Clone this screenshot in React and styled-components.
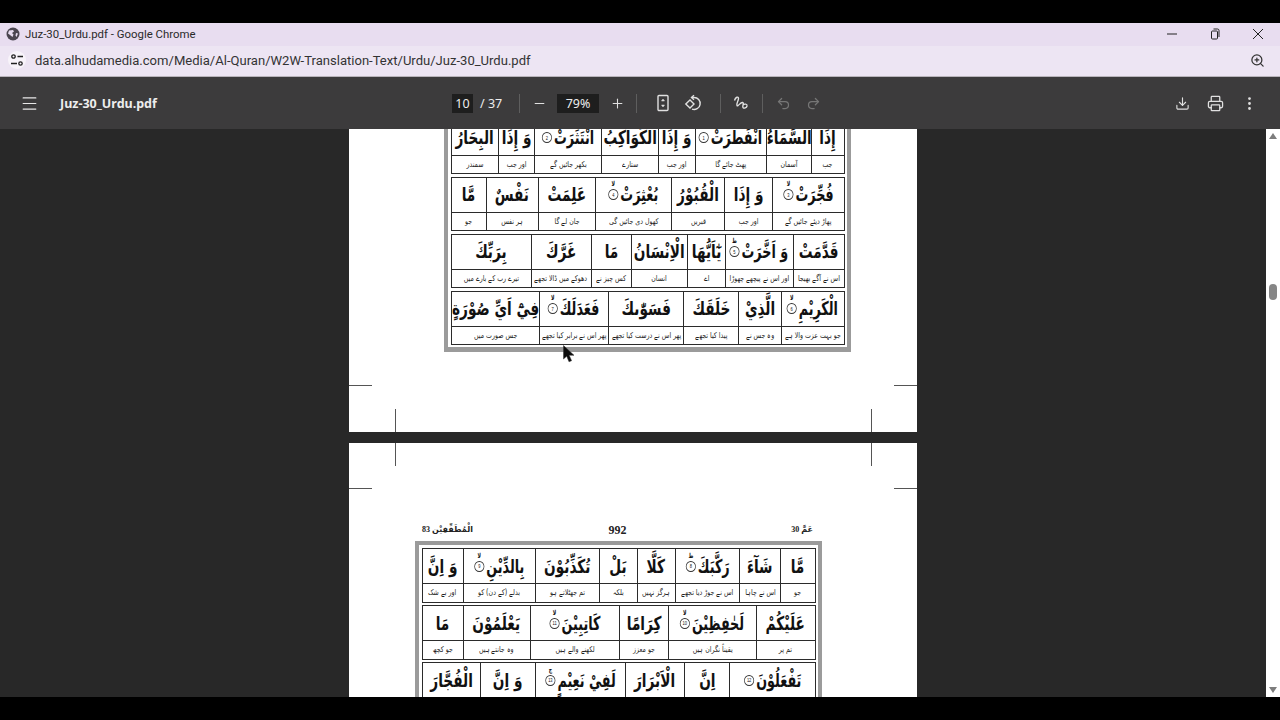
import styled, { createGlobalStyle } from "styled-components";
import {
  Menu,
  Minus,
  Plus,
  Download,
  Printer,
  EllipsisVertical,
  Undo2,
  Redo2,
  ZoomIn,
} from "lucide-react";

const firstPageRows = [
  {
    widths: [32, 45, 72, 36, 57, 68, 36, 47],
    words: ["إِذَا", "السَّمَآءُ", ["انْفَطَرَتْ", "1"], "وَ إِذَا", "الْكَوَاكِبُ", ["انْتَثَرَتْ", "2"], "وَ إِذَا", "الْبِحَارُ"],
    notes: ["جب", "آسمان", "پھٹ جائے گا", "اور جب", "ستارے", "بکھر جائیں گے", "اور جب", "سمندر"],
  },
  {
    widths: [72, 48, 53, 77, 57, 52, 35],
    words: [["فُجِّرَتْ", "3", "لا"], "وَ إِذَا", "الْقُبُوْرُ", ["بُعْثِرَتْ", "4", "لا"], "عَلِمَتْ", "نَفْسٌ", "مَّا"],
    notes: ["پھاڑ دیئے جائیں گے", "اور جب", "قبریں", "کھول دی جائیں گی", "جان لے گا", "ہر نفس", "جو"],
  },
  {
    widths: [51, 68, 38, 56, 40, 60, 81],
    words: ["قَدَّمَتْ", ["وَ اَخَّرَتْ", "5", "ط"], "يٰٓاَيُّهَا", "الْاِنْسَانُ", "مَا", "غَرَّكَ", "بِرَبِّكَ"],
    notes: ["اس نے آگے بھیجا", "اور اس نے پیچھے چھوڑا", "اے", "انسان", "کس چیز نے", "دھوکے میں ڈالا تجھے", "تیرے رب کے بارے میں"],
  },
  {
    widths: [63, 42, 55, 76, 69, 89],
    words: [["الْكَرِيْمِ", "6", "لا"], "الَّذِيْ", "خَلَقَكَ", "فَسَوّٰىكَ", ["فَعَدَلَكَ", "7", "لا"], "فِيْٓ اَيِّ صُوْرَةٍ"],
    notes: ["جو بہت عزت والا ہے", "وہ جس نے", "پیدا کیا تجھے", "پھر اس نے درست کیا تجھے", "پھر اس نے برابر کیا تجھے", "جس صورت میں"],
  },
];

const secondPageRows = [
  {
    widths: [34, 41, 65, 38, 37, 65, 73, 41],
    words: ["مَّا", "شَآءَ", ["رَكَّبَكَ", "8", "ط"], "كَلَّا", "بَلْ", "تُكَذِّبُوْنَ", ["بِالدِّيْنِ", "9", "لا"], "وَ اِنَّ"],
    notes: ["جو", "اس نے چاہا", "اس نے جوڑ دیا تجھے", "ہرگز نہیں", "بلکہ", "تم جھٹلاتے ہو", "بدلے (کے دن) کو", "اور بے شک"],
  },
  {
    widths: [59, 88, 49, 90, 67, 41],
    words: ["عَلَيْكُمْ", ["لَحٰفِظِيْنَ", "10", "لا"], "كِرَامًا", ["كَاتِبِيْنَ", "11", "لا"], "يَعْلَمُوْنَ", "مَا"],
    notes: ["تم پر", "یقیناً نگران ہیں", "جو معزز", "لکھنے والے ہیں", "وہ جانتے ہیں", "جو کچھ"],
  },
  {
    widths: [86, 45, 59, 91, 54, 59],
    words: [["تَفْعَلُوْنَ", "12"], "اِنَّ", "الْاَبْرَارَ", ["لَفِيْ نَعِيْمٍ", "13", "ج"], "وَ اِنَّ", "الْفُجَّارَ"],
    notes: ["تم کرتے ہو", "بے شک", "نیک لوگ", "نعمتوں میں ہوں گے", "اور بے شک", "بدکار"],
  },
];

const AyahTable = ({ rows }) => (
  <Frame>
    {rows.map((row, i) => (
      <VerseRow key={i} $widths={row.widths}>
        {row.words.map((word, j) => (
          <WordCell key={j}>
            {Array.isArray(word) ? (
              <WordFit $scale={0.67}>
                {word[0]}
                <AyahMark>
                  {word[1]}
                  {word[2] && <StopSign>{word[2]}</StopSign>}
                </AyahMark>
              </WordFit>
            ) : (
              <WordFit $scale={0.72}>{word}</WordFit>
            )}
          </WordCell>
        ))}
        {row.notes.map((note, j) => (
          <NoteCell key={j}>
            <NoteFit>{note}</NoteFit>
          </NoteCell>
        ))}
      </VerseRow>
    ))}
  </Frame>
);

const CropMarks = ({ $edge }) => (
  <>
    <MarkH $edge={$edge} $side="left" />
    <MarkH $edge={$edge} $side="right" />
    <MarkV $edge={$edge} $side="left" />
    <MarkV $edge={$edge} $side="right" />
  </>
);

const App = () => {
  return (
    <Screen>
      <GlobalStyle />
      <TitleBar>
        <TitleGroup>
          <svg width="14" height="14" viewBox="0 0 14 14">
            <circle cx="7" cy="7" r="6.5" fill="#4b4650" />
            <path d="M3 3.500 7 3l1 1.500-2 1.500 1.500 1.500-1 2.500L4 8 2 6.500zM10 6l2 .5-1.500 3.500-1-1.500z" fill="#e6dcef" />
          </svg>
          Juz-30_Urdu.pdf - Google Chrome
        </TitleGroup>
        <WindowButtons>
          <svg width="12" height="12" viewBox="0 0 12 12">
            <path d="M1 6h10" stroke="#222" strokeWidth="1" />
          </svg>
          <svg width="12" height="12" viewBox="0 0 12 12" fill="none" stroke="#222">
            <rect x="2.500" y="3" width="6" height="8" rx="1" />
            <path d="M4.500 1h4a1.500 1.500 0 0 1 1.500 1.500V9" />
          </svg>
          <svg width="12" height="12" viewBox="0 0 12 12">
            <path d="M1 1l10 10M11 1 1 11" stroke="#222" strokeWidth="1" />
          </svg>
        </WindowButtons>
      </TitleBar>

      <AddressBar>
        <TuneBadge>
          <svg width="14" height="14" viewBox="0 0 14 14" fill="none" stroke="#222" strokeWidth="1.300">
            <circle cx="3.500" cy="3.500" r="1.700" />
            <path d="M7.500 3.500H13M1 10.500h6" />
            <circle cx="10.500" cy="10.500" r="1.700" />
          </svg>
        </TuneBadge>
        <Url>data.alhudamedia.com/Media/Al-Quran/W2W-Translation-Text/Urdu/Juz-30_Urdu.pdf</Url>
        <ZoomIn size={15} color="#333" strokeWidth={2} />
      </AddressBar>

      <Toolbar>
        <ToolStart>
          <Menu size={19} color="#e8e8e8" strokeWidth={1.500} />
          <FileName>Juz-30_Urdu.pdf</FileName>
        </ToolStart>
        <ToolCenter>
          <NumberBox $width={21}>10</NumberBox>
          <PageCount>/ 37</PageCount>
          <ToolDivider $left={12} $right={4} />
          <IconSlot>
            <Minus size={15} color="#e0e0e0" strokeWidth={1.700} />
          </IconSlot>
          <NumberBox $width={42} $left={3}>79%</NumberBox>
          <IconSlot $left={3}>
            <Plus size={15} color="#e0e0e0" strokeWidth={1.700} />
          </IconSlot>
          <ToolDivider $left={4} $right={11} />
          <IconSlot>
            <svg width="18" height="18" viewBox="0 0 18 18" fill="none" stroke="#e0e0e0" strokeWidth="1.400">
              <rect x="4" y="1.500" width="10" height="15" rx="1" />
              <path d="M9 5 7.500 7h3zM9 13l-1.500-2h3z" fill="#e0e0e0" strokeWidth="0.500" />
            </svg>
          </IconSlot>
          <IconSlot>
            <svg width="18" height="18" viewBox="0 0 18 18" fill="none" stroke="#e0e0e0" strokeWidth="1.400">
              <path d="M1.800 10 6 6l4 4-4 4z" />
              <path d="M7.500 3.500H10a6 6 0 1 1-2 11.600" />
              <path d="M10 1.200 7.500 3.500 10 5.800" />
            </svg>
          </IconSlot>
          <ToolDivider $left={12} $right={5} />
          <IconSlot>
            <svg width="18" height="18" viewBox="0 0 18 18" fill="none" stroke="#e0e0e0" strokeWidth="1.400">
              <path d="M2.500 6.500C3.500 3 6.500 2 6.500 4.500 6.500 7 4 9.500 5 11.500c1 1.500 3.500-3.500 5.500-3 2 .5-.5 3.500.5 5 1 1.200 3.500.5 4-1.500.4-2-2.500-2.500-4-1" />
            </svg>
          </IconSlot>
          <ToolDivider $left={6} $right={5} />
          <IconSlot>
            <Undo2 size={15} color="#767676" />
          </IconSlot>
          <IconSlot>
            <Redo2 size={15} color="#767676" />
          </IconSlot>
        </ToolCenter>
        <ToolEnd>
          <Download size={15} color="#e0e0e0" strokeWidth={1.800} />
          <Printer size={17} color="#e0e0e0" strokeWidth={1.800} />
          <EllipsisVertical size={17} color="#e0e0e0" />
        </ToolEnd>
      </Toolbar>

      <Viewer>
        <Pages>
          <Page $height={303} $bottom={80} $indent={95}>
            <AyahTable rows={firstPageRows} />
            <CropMarks $edge="bottom" />
          </Page>
          <Page $top={78} $indent={66}>
            <PageHeader>
              <HeaderSide>83 الْمُطَفِّفِيْن</HeaderSide>
              <PageNumber>992</PageNumber>
              <HeaderSide $end>عَمَّ 30</HeaderSide>
            </PageHeader>
            <AyahTable rows={secondPageRows} />
            <CropMarks $edge="top" />
          </Page>
        </Pages>
        <Scrollbar>
          <ScrollArrow />
          <ScrollTrack>
            <ScrollThumb />
          </ScrollTrack>
          <ScrollArrow $down />
        </Scrollbar>
        <Pointer width="13" height="18" viewBox="0 0 13 18">
          <path d="M0.500 0.500V14l3.200-2.800 2.300 5.600 2.600-1.100-2.400-5.400H11z" fill="#0c0c0c" stroke="#333" strokeWidth="0.500" />
        </Pointer>
      </Viewer>
    </Screen>
  );
};

const GlobalStyle = createGlobalStyle`
  html, body, #root {
    margin: 0;
    height: 100%;
    background: #000;
  }
  * {
    box-sizing: border-box;
  }
`;

const Screen = styled.div`
  height: 720px;
  padding: 23px 0;
  display: flex;
  flex-direction: column;
  overflow: hidden;
  font-family: "Noto Sans", "Liberation Sans", sans-serif;
`;

const TitleBar = styled.div`
  height: 23px;
  flex: none;
  padding: 0 16px 1px 6px;
  display: flex;
  align-items: center;
  justify-content: space-between;
  background: #e8ddf0;
  color: #2a2a2a;
  font-family: Roboto, sans-serif;
  font-size: 11.400px;
`;

const TitleGroup = styled.div`
  display: flex;
  align-items: center;
  gap: 5px;
`;

const WindowButtons = styled.div`
  display: flex;
  align-items: center;
  gap: 31px;
`;

const AddressBar = styled.div`
  height: 31px;
  flex: none;
  padding: 0 15px 2px 8px;
  display: flex;
  align-items: center;
  background: #ede5f3;
  border-bottom: 1px solid #b9b4bb;
`;

const TuneBadge = styled.div`
  width: 18px;
  height: 18px;
  margin-right: 9px;
  display: flex;
  align-items: center;
  justify-content: center;
  background: #f8f4fa;
  border-radius: 50%;
`;

const Url = styled.div`
  flex: 1;
  color: #333;
  font-family: Roboto, sans-serif;
  font-size: 13.050px;
`;

const Toolbar = styled.div`
  height: 52px;
  flex: none;
  display: grid;
  grid-template-columns: 452px auto 1fr;
  align-items: center;
  background: #3c3b3c;
  color: #ededed;
  font-size: 12.500px;
`;

const ToolStart = styled.div`
  padding-left: 20px;
  display: flex;
  align-items: center;
  gap: 21px;
`;

const FileName = styled.div`
  font-weight: 700;
`;

const ToolCenter = styled.div`
  display: flex;
  align-items: center;
`;

const NumberBox = styled.div`
  width: ${(p) => p.$width}px;
  height: 19px;
  margin-left: ${(p) => p.$left || 0}px;
  display: flex;
  align-items: center;
  justify-content: center;
  background: #1e1e1e;
`;

const PageCount = styled.div`
  width: 27px;
  margin-left: 7px;
`;

const ToolDivider = styled.div`
  width: 1px;
  height: 19px;
  margin-left: ${(p) => p.$left}px;
  margin-right: ${(p) => p.$right}px;
  background: #5e5e5e;
`;

const IconSlot = styled.div`
  width: 30px;
  margin-left: ${(p) => p.$left || 0}px;
  display: flex;
  justify-content: center;
`;

const ToolEnd = styled.div`
  padding-right: 22px;
  display: flex;
  align-items: center;
  justify-content: flex-end;
  gap: 17px;
`;

const Viewer = styled.div`
  flex: 1;
  min-height: 0;
  position: relative;
  display: flex;
  background: #282828;
`;

const Pages = styled.div`
  flex: 1;
  display: flex;
  flex-direction: column;
  align-items: center;
  gap: 11px;
  overflow: hidden;
`;

const Page = styled.div`
  width: 568px;
  flex: none;
  height: ${(p) => (p.$height ? `${p.$height}px` : "auto")};
  padding: ${(p) => p.$top || 0}px 0 ${(p) => p.$bottom || 0}px ${(p) => p.$indent}px;
  position: relative;
  display: flex;
  flex-direction: column;
  justify-content: ${(p) => (p.$height ? "flex-end" : "flex-start")};
  background: #fff;
  overflow: hidden;
`;

const MarkH = styled.div`
  position: absolute;
  ${(p) => p.$side}: 0;
  ${(p) => p.$edge}: ${(p) => (p.$edge === "bottom" ? 46 : 45)}px;
  width: 23px;
  height: 1px;
  background: #555;
`;

const MarkV = styled.div`
  position: absolute;
  ${(p) => p.$side}: ${(p) => (p.$side === "left" ? 46 : 45)}px;
  ${(p) => p.$edge}: 0;
  width: 1px;
  height: 23px;
  background: #555;
`;

const PageHeader = styled.div`
  width: 391px;
  height: 20px;
  margin-left: 7px;
  display: grid;
  grid-template-columns: 1fr auto 1fr;
  align-items: start;
  line-height: 18px;
  color: #222;
  font-family: "Liberation Serif", "DejaVu Sans", serif;
`;

const HeaderSide = styled.div`
  text-align: ${(p) => (p.$end ? "right" : "left")};
  font-size: 8px;
  font-weight: 700;
`;

const PageNumber = styled.div`
  font-size: 12px;
  font-weight: 700;
`;

const Frame = styled.div`
  width: 407px;
  flex: none;
  padding: 3px 2.500px 2px;
  display: flex;
  flex-direction: column;
  gap: 2.500px;
  border: 4px solid #9b9b9b;
  border-bottom-width: 5px;
  background: #fff;
`;

const VerseRow = styled.div`
  width: 394px;
  flex: none;
  display: grid;
  grid-template-columns: ${(p) => p.$widths.map((w) => `${w}fr`).join(" ")};
  grid-template-rows: 34px 17.500px;
  direction: rtl;
  border: 1px solid #2b2b2b;
  background: #2b2b2b;
  gap: 1px;
`;

const WordCell = styled.div`
  min-width: 0;
  display: flex;
  align-items: center;
  justify-content: center;
  background: #fff;
  color: #111;
  font-family: "DejaVu Sans", sans-serif;
  font-size: 19px;
  font-weight: 700;
  line-height: 1;
  white-space: nowrap;
  overflow: hidden;
`;

const WordFit = styled.span`
  flex: none;
  display: inline-flex;
  align-items: center;
  gap: 3px;
  transform: scaleX(${(p) => p.$scale});
`;

const AyahMark = styled.span`
  width: 15px;
  height: 11px;
  flex: none;
  position: relative;
  display: flex;
  align-items: center;
  justify-content: center;
  border: 1px solid #333;
  border-radius: 50%;
  font-family: "Liberation Sans", sans-serif;
  font-size: 6px;
  font-weight: 400;
`;

const StopSign = styled.span`
  position: absolute;
  top: -9px;
  left: 0;
  right: 0;
  text-align: center;
  font-family: "DejaVu Sans", sans-serif;
  font-size: 7px;
  font-weight: 700;
`;

const NoteCell = styled.div`
  min-width: 0;
  display: flex;
  align-items: center;
  justify-content: center;
  background: #fff;
  color: #222;
  font-family: "DejaVu Sans", sans-serif;
  font-size: 8px;
  white-space: nowrap;
  overflow: hidden;
`;

const NoteFit = styled.span`
  flex: none;
  transform: scaleX(0.78);
`;

const Scrollbar = styled.div`
  width: 14px;
  flex: none;
  padding: 4px 0;
  display: flex;
  flex-direction: column;
  align-items: center;
  background: #fff;
`;

const ScrollArrow = styled.div`
  width: 0;
  height: 0;
  flex: none;
  border-left: 4.500px solid transparent;
  border-right: 4.500px solid transparent;
  ${(p) => (p.$down ? "border-top" : "border-bottom")}: 6px solid #7d7d7d;
`;

const ScrollTrack = styled.div`
  flex: 1;
  padding-top: 145px;
`;

const ScrollThumb = styled.div`
  width: 8px;
  height: 16px;
  background: #868686;
  border-radius: 4px;
`;

const Pointer = styled.svg`
  position: absolute;
  left: 563px;
  top: 216px;
`;

export default App;
